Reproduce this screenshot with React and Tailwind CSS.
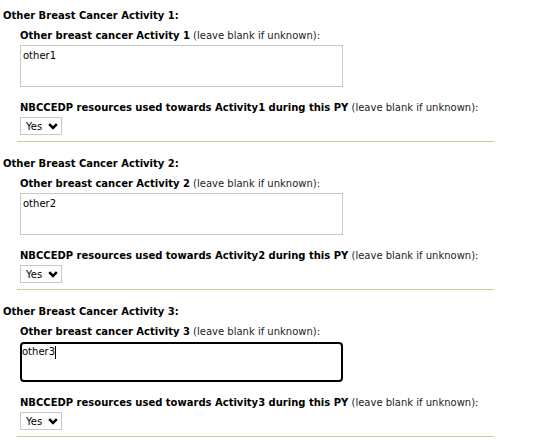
import React from "react";

const activities = [
    { id: 1, value: "other1", focused: false },
    { id: 2, value: "other2", focused: false },
    { id: 3, value: "other3", focused: true },
];

function Chevron() {
    return (
        <svg width="10" height="7" viewBox="0 0 10 7" className="ml-[6px]">
            <polyline points="1.2,1.2 5,5 8.8,1.2" fill="none" stroke="#000" strokeWidth="2.5" />
        </svg>
    );
}

function ActivitySection({ activity, first }) {
    return (
        <section>
            <h3 className={`pl-[3px] text-[10px] leading-[14px] font-bold text-black ${first ? "pt-[9px]" : "pt-[15px]"}`}>
                Other Breast Cancer Activity {activity.id}:
            </h3>

            <div className="pl-[20px]">
                {/* Activity description */}
                <p className="mt-[6px] text-[10px] leading-[14px]">
                    <span className="font-bold text-black">Other breast cancer Activity {activity.id}</span>{" "}
                    <span className="text-[#222]">(leave blank if unknown):</span>
                </p>
                {activity.focused ? (
                    <div className="mt-[3px] w-[323px] h-[40px] border-2 border-black rounded-[4px] pt-[1px] text-[10px] leading-[14px] text-black flex items-start">
                        <span>{activity.value}</span>
                        <span className="inline-block w-px h-[13px] bg-black mt-[1px]"></span>
                    </div>
                ) : (
                    <div className="mt-[2px] w-[323px] h-[42px] border border-[#c8c8c8] px-[2px] pt-[3px] text-[10px] leading-[14px] text-black">
                        {activity.value}
                    </div>
                )}

                {/* Resources select */}
                <p className="mt-[14px] text-[10px] leading-[14px]">
                    <span className="font-bold text-black">
                        NBCCEDP resources used towards Activity{activity.id} during this PY
                    </span>{" "}
                    <span className="text-[#222]">(leave blank if unknown):</span>
                </p>
                <div className="mt-[2px] w-[42px] h-[18px] border border-[#c8c8c8] flex items-center pl-[5px] text-[10px] text-black">
                    Yes
                    <Chevron />
                </div>
            </div>

            <div className="mt-[6px] ml-[17px] w-[477px] border-t border-[#cccc99]"></div>
        </section>
    );
}

export default function App() {
    return (
        <div className="w-[559px] h-[443px] bg-white overflow-hidden font-['DejaVu_Sans',sans-serif]">
            {activities.map((activity, i) => (
                <ActivitySection key={activity.id} activity={activity} first={i === 0} />
            ))}
        </div>
    );
}
